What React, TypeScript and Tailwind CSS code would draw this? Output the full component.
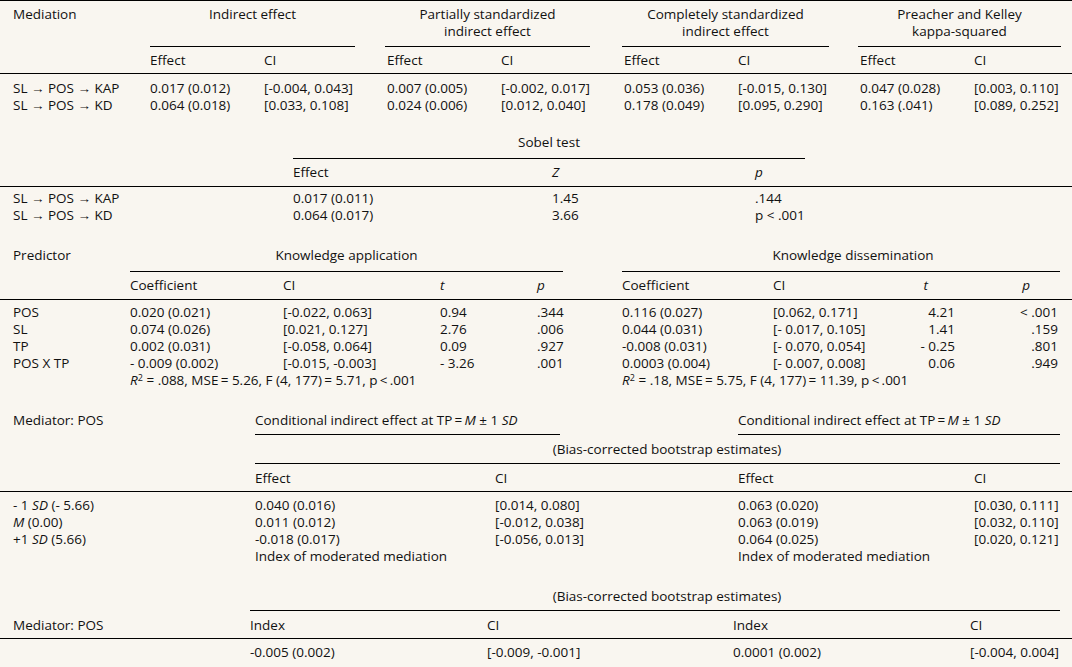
import React from "react";

// column templates for each block of the table
const T1 = "grid grid-cols-[150px_114px_123px_114px_123px_114px_122px_114px_98px]";
const T2 = "grid grid-cols-[293px_259px_203px_1fr]";
const T3 = "grid grid-cols-[130px_153px_157px_97px_85px_151px_107px_75px_1fr]";
const T4 = "grid grid-cols-[255px_240px_243px_236px_1fr]";
const T5 = "grid grid-cols-[250px_237px_246px_237px_1fr]";

const MEDIATION_ROWS = [
    ["SL → POS → KAP", "0.017 (0.012)", "[-0.004, 0.043]", "0.007 (0.005)", "[-0.002, 0.017]", "0.053 (0.036)", "[-0.015, 0.130]", "0.047 (0.028)", "[0.003, 0.110]"],
    ["SL → POS → KD", "0.064 (0.018)", "[0.033, 0.108]", "0.024 (0.006)", "[0.012, 0.040]", "0.178 (0.049)", "[0.095, 0.290]", "0.163 (.041)", "[0.089, 0.252]"],
];

const SOBEL_ROWS = [
    ["SL → POS → KAP", "0.017 (0.011)", "1.45", ".144"],
    ["SL → POS → KD", "0.064 (0.017)", "3.66", "p < .001"],
];

const PREDICTOR_ROWS = [
    ["POS", "0.020 (0.021)", "[-0.022, 0.063]", "0.94", ".344", "0.116 (0.027)", "[0.062, 0.171]", "4.21", "< .001"],
    ["SL", "0.074 (0.026)", "[0.021, 0.127]", "2.76", ".006", "0.044 (0.031)", "[- 0.017, 0.105]", "1.41", ".159"],
    ["TP", "0.002 (0.031)", "[-0.058, 0.064]", "0.09", ".927", "-0.008 (0.031)", "[- 0.070, 0.054]", "- 0.25", ".801"],
    ["POS X TP", "- 0.009 (0.002)", "[-0.015, -0.003]", "- 3.26", ".001", "0.0003 (0.004)", "[- 0.007, 0.008]", "0.06", ".949"],
];

const CONDITIONAL_ROWS = [
    { label: <>- 1 <i>SD</i> (- 5.66)</>, values: ["0.040 (0.016)", "[0.014, 0.080]", "0.063 (0.020)", "[0.030, 0.111]"] },
    { label: <><i>M</i> (0.00)</>, values: ["0.011 (0.012)", "[-0.012, 0.038]", "0.063 (0.019)", "[0.032, 0.110]"] },
    { label: <>+1 <i>SD</i> (5.66)</>, values: ["-0.018 (0.017)", "[-0.056, 0.013]", "0.064 (0.025)", "[0.020, 0.121]"] },
];

function Group({ className = "", children }: { className?: string; children: React.ReactNode }) {
    return <div className={`border-b border-black pb-[6px] text-center ${className}`}>{children}</div>;
}

function FitLine({ coef, mse, f }: { coef: string; mse: string; f: string }) {
    return (
        <span className="whitespace-nowrap">
            <i>R</i>
            <span className="relative -top-[4px] text-[9px] leading-none">2</span> = {coef}, MSE{"\u2009"}= {mse}, F (4, 177){"\u2009"}= {f}, p{"\u2009"}&lt;{"\u2009"}.001
        </span>
    );
}

function Conditional() {
    return (
        <>
            Conditional indirect effect at TP{"\u2009"}={"\u2009"}
            <i>M</i> ± 1 <i>SD</i>
        </>
    );
}

export default function App() {
    return (
        <div className="min-h-[667px] w-[1072px] bg-[#f9f6f0] font-['Open_Sans',sans-serif] text-[13.5px] leading-[17px] text-[#111]">
            {/* Mediation */}
            <div className="border-t border-black">
                <div className={`${T1} pt-[5px]`}>
                    <div className="pl-[13px]">Mediation</div>
                    <Group className="col-span-2 w-[205px]">Indirect effect</Group>
                    <Group className="col-span-2 w-[205px] -ml-[2px]">
                        Partially standardized
                        <br />
                        indirect effect
                    </Group>
                    <Group className="col-span-2 w-[207px] -ml-[2px]">
                        Completely standardized
                        <br />
                        indirect effect
                    </Group>
                    <Group className="col-span-2 w-[203px] -ml-[2px]">
                        Preacher and Kelley
                        <br />
                        kappa-squared
                    </Group>
                </div>
                <div className={`${T1} border-b border-black pt-[5px] pb-[4px]`}>
                    <div />
                    {["Effect", "CI", "Effect", "CI", "Effect", "CI", "Effect", "CI"].map((h, i) => (
                        <div key={i}>{h}</div>
                    ))}
                </div>
                <div className="pt-[6px]">
                    {MEDIATION_ROWS.map((row) => (
                        <div key={row[0]} className={T1}>
                            {row.map((cell, i) => (
                                <div key={i} className={i === 0 ? "pl-[13px] whitespace-nowrap" : "whitespace-nowrap"}>
                                    {cell}
                                </div>
                            ))}
                        </div>
                    ))}
                </div>
            </div>

            {/* Sobel test */}
            <div className="mt-[20px]">
                <div className={T2}>
                    <div />
                    <div className="col-span-3 w-[512px] border-b border-black pb-[7px] text-center">Sobel test</div>
                </div>
                <div className={`${T2} border-b border-black pt-[5px] pb-[5px]`}>
                    <div />
                    <div>Effect</div>
                    <div className="italic">Z</div>
                    <div className="italic">p</div>
                </div>
                <div className="pt-[3px]">
                    {SOBEL_ROWS.map((row) => (
                        <div key={row[0]} className={T2}>
                            {row.map((cell, i) => (
                                <div key={i} className={i === 0 ? "pl-[13px]" : ""}>
                                    {cell}
                                </div>
                            ))}
                        </div>
                    ))}
                </div>
            </div>

            {/* Predictor */}
            <div className="mt-[23px]">
                <div className={T3}>
                    <div className="pl-[13px]">Predictor</div>
                    <Group className="col-span-4 w-[433px] pb-[7px]">Knowledge application</Group>
                    <Group className="col-span-4 w-[438px] pb-[7px] pl-[24px]">Knowledge dissemination</Group>
                </div>
                <div className={`${T3} border-b border-black pt-[5px] pb-[5px]`}>
                    <div />
                    <div>Coefficient</div>
                    <div>CI</div>
                    <div className="italic">t</div>
                    <div className="italic">p</div>
                    <div>Coefficient</div>
                    <div>CI</div>
                    <div className="pr-[27px] text-right italic">t</div>
                    <div className="pr-[42px] text-right italic">p</div>
                </div>
                <div className="pt-[4px]">
                    {PREDICTOR_ROWS.map((row) => (
                        <div key={row[0]} className={T3}>
                            {row.map((cell, i) => (
                                <div
                                    key={i}
                                    className={
                                        i === 0
                                            ? "pl-[13px]"
                                            : i === 7
                                              ? "text-right"
                                              : i === 8
                                                ? "pr-[14px] text-right"
                                                : "whitespace-nowrap"
                                    }
                                >
                                    {cell}
                                </div>
                            ))}
                        </div>
                    ))}
                    <div className={T3}>
                        <div />
                        <div className="col-span-4">
                            <FitLine coef=".088" mse="5.26" f="5.71" />
                        </div>
                        <div className="col-span-4">
                            <FitLine coef=".18" mse="5.75" f="11.39" />
                        </div>
                    </div>
                </div>
            </div>

            {/* Conditional indirect effects */}
            <div className="mt-[23px]">
                <div className={T4}>
                    <div className="pl-[13px]">Mediator: POS</div>
                    <div className="col-span-2 w-[305px] border-b border-black pb-[5px] whitespace-nowrap">
                        <Conditional />
                    </div>
                    <div className="col-span-2 w-[322px] border-b border-black pb-[5px] whitespace-nowrap">
                        <Conditional />
                    </div>
                </div>
                <div className={T4}>
                    <div />
                    <div className="col-span-4 w-[805px] border-b border-black pt-[6px] pb-[5px] pl-[19px] text-center">
                        (Bias-corrected bootstrap estimates)
                    </div>
                </div>
                <div className={`${T4} border-b border-black pt-[6px] pb-[4px]`}>
                    <div />
                    <div>Effect</div>
                    <div>CI</div>
                    <div>Effect</div>
                    <div>CI</div>
                </div>
                <div className="pt-[5px]">
                    {CONDITIONAL_ROWS.map((row, r) => (
                        <div key={r} className={T4}>
                            <div className="pl-[13px]">{row.label}</div>
                            {row.values.map((v, i) => (
                                <div key={i}>{v}</div>
                            ))}
                        </div>
                    ))}
                    <div className={T4}>
                        <div />
                        <div className="col-span-2">Index of moderated mediation</div>
                        <div className="col-span-2">Index of moderated mediation</div>
                    </div>
                </div>
            </div>

            {/* Index of moderated mediation */}
            <div className="mt-[23px] border-b border-black">
                <div className={T5}>
                    <div />
                    <div className="col-span-4 w-[810px] border-b border-black pb-[5px] pl-[24px] text-center">
                        (Bias-corrected bootstrap estimates)
                    </div>
                </div>
                <div className={`${T5} border-b border-black pt-[6px] pb-[4px]`}>
                    <div className="pl-[13px]">Mediator: POS</div>
                    <div>Index</div>
                    <div>CI</div>
                    <div>Index</div>
                    <div>CI</div>
                </div>
                <div className={`${T5} pt-[5px] pb-[7px]`}>
                    <div />
                    <div>-0.005 (0.002)</div>
                    <div>[-0.009, -0.001]</div>
                    <div>0.0001 (0.002)</div>
                    <div>[-0.004, 0.004]</div>
                </div>
            </div>
        </div>
    );
}
